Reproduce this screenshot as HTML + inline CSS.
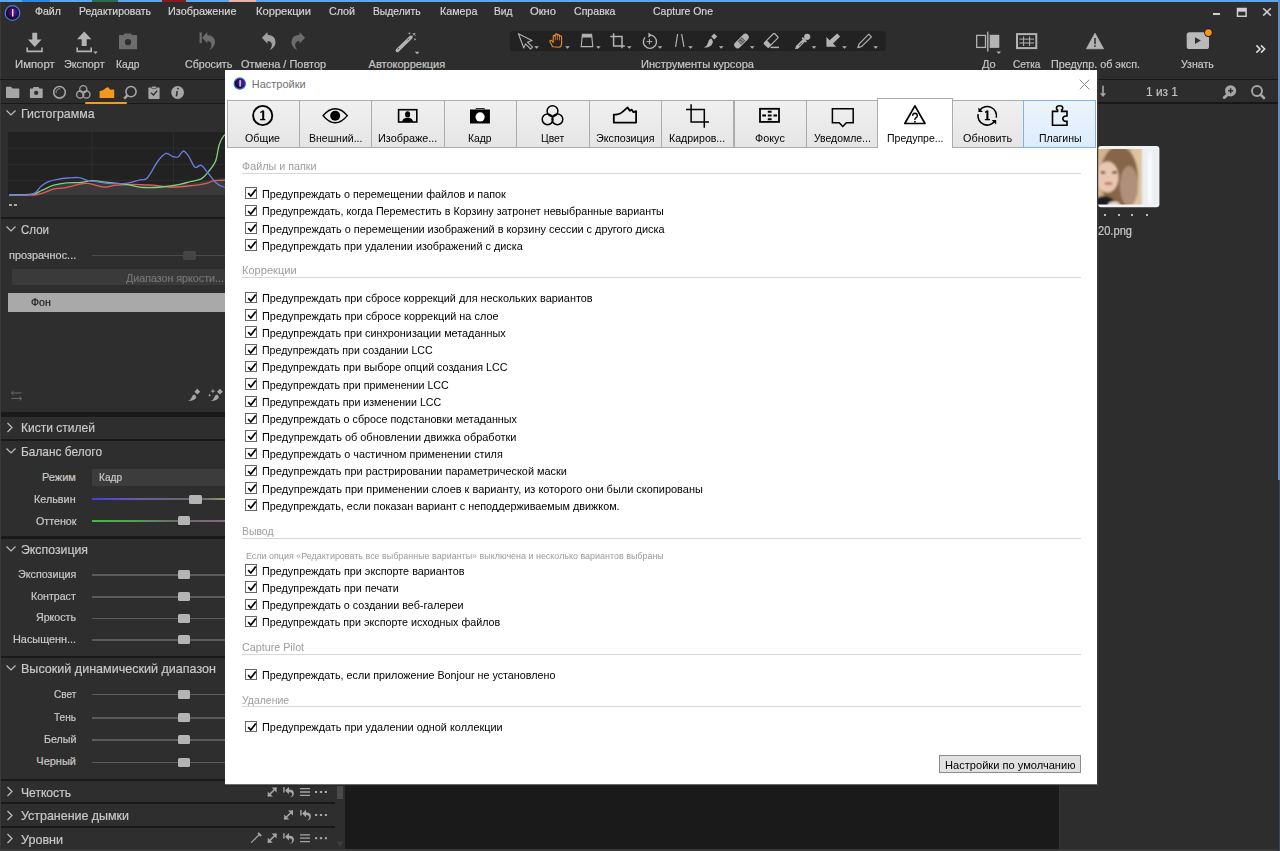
<!DOCTYPE html>
<html><head><meta charset="utf-8"><style>
html,body{margin:0;padding:0;width:1280px;height:851px;overflow:hidden;background:#2b2b2b}
</style></head><body>
<div style="position:absolute;left:0;top:0;width:1280px;height:851px;background:#2d2d2d"></div>
<div style="position:absolute;left:1px;top:104px;width:334px;height:745px;background:#2e2e2e;"></div>
<div style="position:absolute;left:0px;top:0px;width:1280px;height:2px;background:#5ea6ea;"></div>
<div style="position:absolute;left:22px;top:0px;width:28px;height:2px;background:#2f86de;"></div>
<div style="position:absolute;left:92px;top:0px;width:26px;height:2px;background:#2d6a4e;"></div>
<div style="position:absolute;left:162px;top:0px;width:24px;height:2px;background:#8a1c1c;"></div>
<div style="position:absolute;left:229px;top:0px;width:27px;height:2px;background:#e7b2a8;"></div>
<div style="position:absolute;left:0px;top:2px;width:1px;height:849px;background:#3a3a3a;"></div>
<div style="position:absolute;left:1278px;top:0px;width:2px;height:480px;background:#5f8fc8;"></div>
<div style="position:absolute;left:1279px;top:480px;width:1px;height:371px;background:#34485e;"></div>
<div style="position:absolute;left:0px;top:79px;width:1278px;height:1px;background:#171717;"></div>
<div style="position:absolute;left:34.60px;top:6.35px;font-family:'Liberation Sans';font-size:11px;line-height:1;font-weight:400;color:#d2d2d2;white-space:pre;transform:scaleX(0.9576);transform-origin:0 0;-webkit-text-stroke:0.2px #d2d2d2;">Файл</div>
<div style="position:absolute;left:78.50px;top:6.35px;font-family:'Liberation Sans';font-size:11px;line-height:1;font-weight:400;color:#d2d2d2;white-space:pre;transform:scaleX(0.9461);transform-origin:0 0;-webkit-text-stroke:0.2px #d2d2d2;">Редактировать</div>
<div style="position:absolute;left:167.50px;top:6.35px;font-family:'Liberation Sans';font-size:11px;line-height:1;font-weight:400;color:#d2d2d2;white-space:pre;transform:scaleX(0.9885);transform-origin:0 0;-webkit-text-stroke:0.2px #d2d2d2;">Изображение</div>
<div style="position:absolute;left:256.00px;top:6.35px;font-family:'Liberation Sans';font-size:11px;line-height:1;font-weight:400;color:#d2d2d2;white-space:pre;transform:scaleX(1.0132);transform-origin:0 0;-webkit-text-stroke:0.2px #d2d2d2;">Коррекции</div>
<div style="position:absolute;left:329.00px;top:6.35px;font-family:'Liberation Sans';font-size:11px;line-height:1;font-weight:400;color:#d2d2d2;white-space:pre;transform:scaleX(0.9720);transform-origin:0 0;-webkit-text-stroke:0.2px #d2d2d2;">Слой</div>
<div style="position:absolute;left:372.50px;top:6.35px;font-family:'Liberation Sans';font-size:11px;line-height:1;font-weight:400;color:#d2d2d2;white-space:pre;transform:scaleX(0.9360);transform-origin:0 0;-webkit-text-stroke:0.2px #d2d2d2;">Выделить</div>
<div style="position:absolute;left:440.00px;top:6.35px;font-family:'Liberation Sans';font-size:11px;line-height:1;font-weight:400;color:#d2d2d2;white-space:pre;transform:scaleX(0.9752);transform-origin:0 0;-webkit-text-stroke:0.2px #d2d2d2;">Камера</div>
<div style="position:absolute;left:494.00px;top:6.35px;font-family:'Liberation Sans';font-size:11px;line-height:1;font-weight:400;color:#d2d2d2;white-space:pre;transform:scaleX(0.9294);transform-origin:0 0;-webkit-text-stroke:0.2px #d2d2d2;">Вид</div>
<div style="position:absolute;left:530.00px;top:6.35px;font-family:'Liberation Sans';font-size:11px;line-height:1;font-weight:400;color:#d2d2d2;white-space:pre;transform:scaleX(1.0171);transform-origin:0 0;-webkit-text-stroke:0.2px #d2d2d2;">Окно</div>
<div style="position:absolute;left:573.50px;top:6.35px;font-family:'Liberation Sans';font-size:11px;line-height:1;font-weight:400;color:#d2d2d2;white-space:pre;transform:scaleX(0.9616);transform-origin:0 0;-webkit-text-stroke:0.2px #d2d2d2;">Справка</div>
<div style="position:absolute;left:653.00px;top:6.22px;font-family:'Liberation Sans';font-size:11.5px;line-height:1;font-weight:400;color:#d2d2d2;white-space:pre;transform:scaleX(0.9110);transform-origin:0 0;-webkit-text-stroke:0.2px #d2d2d2;">Capture One</div>
<svg style="position:absolute;left:4px;top:4.5px;" width="18" height="18" viewBox="0 0 18 18"><defs><radialGradient id="ai" cx="0.55" cy="0.45" r="0.6"><stop offset="0" stop-color="#6a1aa8"/><stop offset="0.6" stop-color="#2a0a4a"/><stop offset="1" stop-color="#000"/></radialGradient></defs><circle cx="8.5" cy="8" r="7.3" fill="url(#ai)" stroke="#3f7fe0" stroke-width="1.3"/><rect x="8" y="4" width="1.4" height="7.5" fill="#e8e0f0"/></svg>
<div style="position:absolute;left:1213px;top:12.6px;width:6.8px;height:2.4px;background:#cfcfcf;"></div>
<svg style="position:absolute;left:1236px;top:7px;" width="12" height="10" viewBox="0 0 12 10"><rect x="1.5" y="1.5" width="8.6" height="7.8" fill="none" stroke="#cfcfcf" stroke-width="1.5"/><rect x="1.5" y="1.2" width="8.6" height="3.5" fill="#cfcfcf"/></svg>
<svg style="position:absolute;left:1262px;top:7px;" width="11" height="10" viewBox="0 0 11 10"><path d="M1.2 1.2 L8.8 8.6 M8.8 1.2 L1.2 8.6" stroke="#cfcfcf" stroke-width="1.5"/></svg>
<div style="position:absolute;left:14.75px;top:58.85px;font-family:'Liberation Sans';font-size:11px;line-height:1;font-weight:400;color:#c6c6c6;white-space:pre;transform:scaleX(1.0307);transform-origin:0 0;-webkit-text-stroke:0.2px #c6c6c6;">Импорт</div>
<div style="position:absolute;left:64.40px;top:58.85px;font-family:'Liberation Sans';font-size:11px;line-height:1;font-weight:400;color:#c6c6c6;white-space:pre;transform:scaleX(0.9820);transform-origin:0 0;-webkit-text-stroke:0.2px #c6c6c6;">Экспорт</div>
<div style="position:absolute;left:116.00px;top:58.85px;font-family:'Liberation Sans';font-size:11px;line-height:1;font-weight:400;color:#c6c6c6;white-space:pre;transform:scaleX(0.9337);transform-origin:0 0;-webkit-text-stroke:0.2px #c6c6c6;">Кадр</div>
<div style="position:absolute;left:185.30px;top:58.85px;font-family:'Liberation Sans';font-size:11px;line-height:1;font-weight:400;color:#c6c6c6;white-space:pre;transform:scaleX(0.9672);transform-origin:0 0;-webkit-text-stroke:0.2px #c6c6c6;">Сбросить</div>
<div style="position:absolute;left:240.90px;top:58.85px;font-family:'Liberation Sans';font-size:11px;line-height:1;font-weight:400;color:#c6c6c6;white-space:pre;transform:scaleX(0.9962);transform-origin:0 0;-webkit-text-stroke:0.2px #c6c6c6;">Отмена / Повтор</div>
<div style="position:absolute;left:368.60px;top:58.85px;font-family:'Liberation Sans';font-size:11px;line-height:1;font-weight:400;color:#c6c6c6;white-space:pre;-webkit-text-stroke:0.2px #c6c6c6;">Автокоррекция</div>
<div style="position:absolute;left:641.00px;top:58.85px;font-family:'Liberation Sans';font-size:11px;line-height:1;font-weight:400;color:#c6c6c6;white-space:pre;transform:scaleX(1.0084);transform-origin:0 0;-webkit-text-stroke:0.2px #c6c6c6;">Инструменты курсора</div>
<div style="position:absolute;left:982.00px;top:58.85px;font-family:'Liberation Sans';font-size:11px;line-height:1;font-weight:400;color:#c6c6c6;white-space:pre;transform:scaleX(1.0034);transform-origin:0 0;-webkit-text-stroke:0.2px #c6c6c6;">До</div>
<div style="position:absolute;left:1013.00px;top:58.85px;font-family:'Liberation Sans';font-size:11px;line-height:1;font-weight:400;color:#c6c6c6;white-space:pre;transform:scaleX(0.9195);transform-origin:0 0;-webkit-text-stroke:0.2px #c6c6c6;">Сетка</div>
<div style="position:absolute;left:1050.50px;top:58.85px;font-family:'Liberation Sans';font-size:11px;line-height:1;font-weight:400;color:#c6c6c6;white-space:pre;transform:scaleX(0.9829);transform-origin:0 0;-webkit-text-stroke:0.2px #c6c6c6;">Предупр. об эксп.</div>
<div style="position:absolute;left:1181.00px;top:58.85px;font-family:'Liberation Sans';font-size:11px;line-height:1;font-weight:400;color:#c6c6c6;white-space:pre;transform:scaleX(0.9593);transform-origin:0 0;-webkit-text-stroke:0.2px #c6c6c6;">Узнать</div>
<div style="position:absolute;left:1px;top:80px;width:334px;height:23px;background:#2d2d2d;"></div>
<div style="position:absolute;left:1px;top:103px;width:334px;height:1px;background:#191919;"></div>
<div style="position:absolute;left:85px;top:102px;width:42px;height:2px;background:#f39a1e;border-radius:1px"></div>
<div style="position:absolute;left:21.00px;top:107.35px;font-family:'Liberation Sans';font-size:13px;line-height:1;font-weight:400;color:#c8c8c8;white-space:pre;transform:scaleX(0.9493);transform-origin:0 0;-webkit-text-stroke:0.2px #c8c8c8;">Гистограмма</div>
<svg style="position:absolute;left:5px;top:109.4px;" width="12" height="8" viewBox="0 0 12 8"><path d="M1.5 1.5 L6 6 L10.5 1.5" fill="none" stroke="#bdbdbd" stroke-width="1.2"/></svg>
<div style="position:absolute;left:21.00px;top:222.95px;font-family:'Liberation Sans';font-size:13px;line-height:1;font-weight:400;color:#c8c8c8;white-space:pre;transform:scaleX(0.8854);transform-origin:0 0;-webkit-text-stroke:0.2px #c8c8c8;">Слои</div>
<svg style="position:absolute;left:5px;top:225px;" width="12" height="8" viewBox="0 0 12 8"><path d="M1.5 1.5 L6 6 L10.5 1.5" fill="none" stroke="#bdbdbd" stroke-width="1.2"/></svg>
<div style="position:absolute;left:21.00px;top:421.35px;font-family:'Liberation Sans';font-size:13px;line-height:1;font-weight:400;color:#c8c8c8;white-space:pre;transform:scaleX(0.9254);transform-origin:0 0;-webkit-text-stroke:0.2px #c8c8c8;">Кисти стилей</div>
<svg style="position:absolute;left:6px;top:421.9px;" width="8" height="11" viewBox="0 0 8 11"><path d="M1.5 1 L6 5.5 L1.5 10" fill="none" stroke="#bdbdbd" stroke-width="1.2"/></svg>
<div style="position:absolute;left:21.00px;top:444.95px;font-family:'Liberation Sans';font-size:13px;line-height:1;font-weight:400;color:#c8c8c8;white-space:pre;transform:scaleX(0.9140);transform-origin:0 0;-webkit-text-stroke:0.2px #c8c8c8;">Баланс белого</div>
<svg style="position:absolute;left:5px;top:447px;" width="12" height="8" viewBox="0 0 12 8"><path d="M1.5 1.5 L6 6 L10.5 1.5" fill="none" stroke="#bdbdbd" stroke-width="1.2"/></svg>
<div style="position:absolute;left:21.00px;top:542.95px;font-family:'Liberation Sans';font-size:13px;line-height:1;font-weight:400;color:#c8c8c8;white-space:pre;transform:scaleX(0.9466);transform-origin:0 0;-webkit-text-stroke:0.2px #c8c8c8;">Экспозиция</div>
<svg style="position:absolute;left:5px;top:545px;" width="12" height="8" viewBox="0 0 12 8"><path d="M1.5 1.5 L6 6 L10.5 1.5" fill="none" stroke="#bdbdbd" stroke-width="1.2"/></svg>
<div style="position:absolute;left:21.00px;top:661.95px;font-family:'Liberation Sans';font-size:13px;line-height:1;font-weight:400;color:#c8c8c8;white-space:pre;transform:scaleX(0.9657);transform-origin:0 0;-webkit-text-stroke:0.2px #c8c8c8;">Высокий динамический диапазон</div>
<svg style="position:absolute;left:5px;top:664px;" width="12" height="8" viewBox="0 0 12 8"><path d="M1.5 1.5 L6 6 L10.5 1.5" fill="none" stroke="#bdbdbd" stroke-width="1.2"/></svg>
<div style="position:absolute;left:21.00px;top:785.75px;font-family:'Liberation Sans';font-size:13px;line-height:1;font-weight:400;color:#c8c8c8;white-space:pre;transform:scaleX(0.9308);transform-origin:0 0;-webkit-text-stroke:0.2px #c8c8c8;">Четкость</div>
<svg style="position:absolute;left:6px;top:786.3px;" width="8" height="11" viewBox="0 0 8 11"><path d="M1.5 1 L6 5.5 L1.5 10" fill="none" stroke="#bdbdbd" stroke-width="1.2"/></svg>
<div style="position:absolute;left:21.00px;top:809.25px;font-family:'Liberation Sans';font-size:13px;line-height:1;font-weight:400;color:#c8c8c8;white-space:pre;transform:scaleX(0.9573);transform-origin:0 0;-webkit-text-stroke:0.2px #c8c8c8;">Устранение дымки</div>
<svg style="position:absolute;left:6px;top:809.8px;" width="8" height="11" viewBox="0 0 8 11"><path d="M1.5 1 L6 5.5 L1.5 10" fill="none" stroke="#bdbdbd" stroke-width="1.2"/></svg>
<div style="position:absolute;left:21.00px;top:832.55px;font-family:'Liberation Sans';font-size:13px;line-height:1;font-weight:400;color:#c8c8c8;white-space:pre;transform:scaleX(0.9659);transform-origin:0 0;-webkit-text-stroke:0.2px #c8c8c8;">Уровни</div>
<svg style="position:absolute;left:6px;top:833.1px;" width="8" height="11" viewBox="0 0 8 11"><path d="M1.5 1 L6 5.5 L1.5 10" fill="none" stroke="#bdbdbd" stroke-width="1.2"/></svg>
<div style="position:absolute;left:1px;top:217px;width:334px;height:2px;background:#191919;"></div>
<div style="position:absolute;left:1px;top:412px;width:334px;height:5px;background:#191919;"></div>
<div style="position:absolute;left:1px;top:439px;width:334px;height:2px;background:#191919;"></div>
<div style="position:absolute;left:1px;top:536px;width:334px;height:3px;background:#191919;"></div>
<div style="position:absolute;left:1px;top:656px;width:334px;height:2px;background:#191919;"></div>
<div style="position:absolute;left:1px;top:779px;width:334px;height:2px;background:#191919;"></div>
<div style="position:absolute;left:1px;top:802px;width:334px;height:2px;background:#191919;"></div>
<div style="position:absolute;left:1px;top:826px;width:334px;height:2px;background:#191919;"></div>
<div style="position:absolute;left:1px;top:849px;width:334px;height:2px;background:#191919;"></div>
<div style="position:absolute;left:0px;top:849px;width:1278px;height:2px;background:#3a3a3a;"></div>
<div style="position:absolute;left:8px;top:132px;width:319px;height:63px;background:#222222;"></div>
<svg style="position:absolute;left:0;top:0" width="335" height="220" viewBox="0 0 335 220"><path d="M8 148.2 H327 M8 164.6 H327 M8 180.6 H327 M92 132 V195 M173.6 132 V195" stroke="#2e2e2e" stroke-width="1"/><polygon points="9.0,195.0 34.0,195.0 45.0,190.0 60.0,184.0 80.0,182.0 100.0,183.5 130.0,184.5 160.0,185.0 190.0,183.5 210.0,180.0 224.0,178.0 330.0,180.0 330.0,195.0" fill="#3a3a3a"/><path d="M9.0 195.0 C13.2 195.0 28.0 195.4 34.0 195.0 C40.0 194.6 41.7 193.4 45.0 192.4 C48.3 191.4 50.7 189.6 54.0 188.8 C57.3 188.1 60.5 188.7 64.7 187.9 C68.9 187.2 75.1 185.1 79.0 184.3 C82.9 183.6 83.8 183.0 88.0 183.4 C92.2 183.8 99.2 186.7 104.0 187.0 C108.8 187.3 111.7 185.6 116.8 185.2 C121.9 184.8 128.8 184.3 134.8 184.3 C140.8 184.3 146.7 184.8 152.7 185.2 C158.7 185.6 164.7 186.9 170.7 187.0 C176.7 187.1 182.7 186.6 188.7 186.0 C194.7 185.4 202.4 184.3 206.6 183.4 C210.8 182.5 211.0 181.2 213.8 180.7 C216.7 180.2 219.3 180.4 223.7 180.3 C228.1 180.2 222.3 179.2 240.0 180.0 C257.7 180.8 315.0 184.2 330.0 185.0" fill="none" stroke="#de5e58" stroke-width="1.3"/><path d="M9.0 195.0 C12.9 194.9 26.9 194.9 32.3 194.2 C37.7 193.5 37.7 192.1 41.3 190.6 C44.9 189.1 49.8 186.5 54.0 185.2 C58.2 183.9 62.0 183.3 66.5 182.9 C71.0 182.5 76.7 182.9 80.9 182.5 C85.1 182.1 87.1 180.7 91.6 180.7 C96.1 180.7 102.1 181.9 107.8 182.5 C113.5 183.1 119.8 183.5 125.8 184.3 C131.8 185.1 137.8 187.1 143.8 187.5 C149.8 187.9 155.7 187.5 161.7 187.0 C167.7 186.5 174.9 185.2 179.7 184.3 C184.5 183.4 186.9 182.5 190.5 181.6 C194.1 180.7 198.3 180.6 201.3 178.9 C204.3 177.2 206.0 174.7 208.4 171.7 C210.8 168.7 213.8 165.5 215.6 161.0 C217.4 156.5 217.8 149.0 219.2 144.8 C220.5 140.6 221.9 137.9 223.7 135.8 C225.5 133.7 228.9 132.6 230.0 132.0" fill="none" stroke="#7ed27e" stroke-width="1.3"/><path d="M9.0 195.0 C12.9 194.9 26.9 195.7 32.3 194.2 C37.7 192.7 38.6 188.1 41.3 186.0 C44.0 183.9 45.8 182.7 48.5 181.6 C51.2 180.5 54.2 179.9 57.5 179.3 C60.8 178.7 64.7 178.3 68.3 178.0 C71.9 177.7 75.7 177.2 79.0 177.6 C82.3 178.0 84.7 180.0 88.0 180.7 C91.3 181.4 95.5 181.6 98.8 182.0 C102.1 182.4 103.3 183.2 107.8 183.4 C112.3 183.6 120.4 184.0 125.8 183.4 C131.2 182.8 136.4 180.7 140.0 179.8 C143.6 178.9 144.3 181.1 147.3 178.0 C150.3 174.9 154.9 165.1 158.0 161.0 C161.1 156.9 163.6 154.2 166.0 153.4 C168.4 152.6 170.5 155.8 172.5 156.4 C174.5 157.0 176.2 157.9 178.0 157.0 C179.8 156.1 181.5 151.1 183.3 151.0 C185.1 150.9 186.8 153.7 188.7 156.4 C190.6 159.1 192.9 165.7 195.0 167.2 C197.1 168.7 199.1 164.3 201.3 165.4 C203.5 166.5 206.0 170.7 208.4 173.5 C210.8 176.3 213.1 180.2 215.6 182.5 C218.1 184.8 219.6 185.8 223.7 187.0 C227.8 188.2 222.3 189.2 240.0 190.0 C257.7 190.8 315.0 191.7 330.0 192.0" fill="none" stroke="#6a7ce0" stroke-width="1.3"/></svg>
<div style="position:absolute;left:8.8px;top:204.3px;width:3px;height:2px;background:#a8a8a8;"></div>
<div style="position:absolute;left:13.7px;top:204.3px;width:3px;height:2px;background:#a8a8a8;"></div>
<div style="position:absolute;left:8.60px;top:249.95px;font-family:'Liberation Sans';font-size:11px;line-height:1;font-weight:400;color:#c8c8c8;white-space:pre;transform:scaleX(0.9926);transform-origin:0 0;-webkit-text-stroke:0.2px #c8c8c8;">прозрачнос...</div>
<div style="position:absolute;left:91.6px;top:255px;width:240px;height:1px;background:#4a4a4a;"></div>
<div style="position:absolute;left:183px;top:251px;width:13px;height:9px;background:#454545;border-radius:2px"></div>
<div style="position:absolute;left:12px;top:269px;width:316px;height:16px;background:#3a3a3a;"></div>
<div style="position:absolute;left:125.80px;top:272.95px;font-family:'Liberation Sans';font-size:11px;line-height:1;font-weight:400;color:#757575;white-space:pre;transform:scaleX(0.9711);transform-origin:0 0;-webkit-text-stroke:0.2px #757575;">Диапазон яркости...</div>
<div style="position:absolute;left:8px;top:292.5px;width:320px;height:19.5px;background:#a9a9a9;"></div>
<div style="position:absolute;left:31.40px;top:296.65px;font-family:'Liberation Sans';font-size:11px;line-height:1;font-weight:400;color:#1e1e1e;white-space:pre;transform:scaleX(0.9629);transform-origin:0 0;-webkit-text-stroke:0.2px #1e1e1e;">Фон</div>
<div style="position:absolute;left:42.00px;top:471.65px;font-family:'Liberation Sans';font-size:11px;line-height:1;font-weight:400;color:#c8c8c8;white-space:pre;-webkit-text-stroke:0.2px #c8c8c8;">Режим</div>
<div style="position:absolute;left:91.6px;top:469px;width:240px;height:16.5px;background:#3c3c3c;"></div>
<div style="position:absolute;left:99.00px;top:472.15px;font-family:'Liberation Sans';font-size:11px;line-height:1;font-weight:400;color:#c8c8c8;white-space:pre;transform:scaleX(0.9177);transform-origin:0 0;-webkit-text-stroke:0.2px #c8c8c8;">Кадр</div>
<div style="position:absolute;left:34.40px;top:493.65px;font-family:'Liberation Sans';font-size:11px;line-height:1;font-weight:400;color:#c8c8c8;white-space:pre;transform:scaleX(0.9817);transform-origin:0 0;-webkit-text-stroke:0.2px #c8c8c8;">Кельвин</div>
<div style="position:absolute;left:35.60px;top:515.65px;font-family:'Liberation Sans';font-size:11px;line-height:1;font-weight:400;color:#c8c8c8;white-space:pre;transform:scaleX(0.9702);transform-origin:0 0;-webkit-text-stroke:0.2px #c8c8c8;">Оттенок</div>
<div style="position:absolute;left:91.6px;top:498px;width:240px;height:2px;background:linear-gradient(90deg,#4a3ae6 0%,#6a5ab0 20%,#6a6a6a 40%,#6a6a6a 46%,#a8a868 58%,#a8a868 100%);"></div>
<div style="position:absolute;left:189.3px;top:494.5px;width:12.6px;height:9px;background:#b4b4b4;border-radius:1.5px"></div>
<div style="position:absolute;left:91.6px;top:519.6px;width:240px;height:2px;background:linear-gradient(90deg,#3cc03c 0%,#5a9a5a 18%,#6a6a6a 36%,#6a6a6a 41%,#8a648a 55%,#b070b0 100%);"></div>
<div style="position:absolute;left:177.6px;top:516.1px;width:12.6px;height:9px;background:#b4b4b4;border-radius:1.5px"></div>
<div style="position:absolute;left:17.60px;top:569.45px;font-family:'Liberation Sans';font-size:11px;line-height:1;font-weight:400;color:#c8c8c8;white-space:pre;transform:scaleX(0.9751);transform-origin:0 0;-webkit-text-stroke:0.2px #c8c8c8;">Экспозиция</div>
<div style="position:absolute;left:91.6px;top:574.4px;width:240px;height:1.5px;background:#5a5a5a;"></div>
<div style="position:absolute;left:177.8px;top:570.4px;width:12.6px;height:9px;background:#b4b4b4;border-radius:1.5px"></div>
<div style="position:absolute;left:31.20px;top:590.65px;font-family:'Liberation Sans';font-size:11px;line-height:1;font-weight:400;color:#c8c8c8;white-space:pre;transform:scaleX(0.9651);transform-origin:0 0;-webkit-text-stroke:0.2px #c8c8c8;">Контраст</div>
<div style="position:absolute;left:91.6px;top:596.2px;width:240px;height:1.5px;background:#5a5a5a;"></div>
<div style="position:absolute;left:177.8px;top:592.2px;width:12.6px;height:9px;background:#b4b4b4;border-radius:1.5px"></div>
<div style="position:absolute;left:36.00px;top:612.35px;font-family:'Liberation Sans';font-size:11px;line-height:1;font-weight:400;color:#c8c8c8;white-space:pre;transform:scaleX(0.9664);transform-origin:0 0;-webkit-text-stroke:0.2px #c8c8c8;">Яркость</div>
<div style="position:absolute;left:91.6px;top:617.7px;width:240px;height:1.5px;background:#5a5a5a;"></div>
<div style="position:absolute;left:177.8px;top:613.7px;width:12.6px;height:9px;background:#b4b4b4;border-radius:1.5px"></div>
<div style="position:absolute;left:12.90px;top:634.35px;font-family:'Liberation Sans';font-size:11px;line-height:1;font-weight:400;color:#c8c8c8;white-space:pre;transform:scaleX(0.9884);transform-origin:0 0;-webkit-text-stroke:0.2px #c8c8c8;">Насыщенн...</div>
<div style="position:absolute;left:91.6px;top:639.4px;width:240px;height:1.5px;background:#5a5a5a;"></div>
<div style="position:absolute;left:177.8px;top:635.4px;width:12.6px;height:9px;background:#b4b4b4;border-radius:1.5px"></div>
<div style="position:absolute;left:53.60px;top:688.85px;font-family:'Liberation Sans';font-size:11px;line-height:1;font-weight:400;color:#c8c8c8;white-space:pre;transform:scaleX(0.9155);transform-origin:0 0;-webkit-text-stroke:0.2px #c8c8c8;">Свет</div>
<div style="position:absolute;left:91.6px;top:693.8px;width:240px;height:1.5px;background:#5a5a5a;"></div>
<div style="position:absolute;left:177.8px;top:689.8px;width:12.6px;height:9px;background:#b4b4b4;border-radius:1.5px"></div>
<div style="position:absolute;left:54.00px;top:712.35px;font-family:'Liberation Sans';font-size:11px;line-height:1;font-weight:400;color:#c8c8c8;white-space:pre;transform:scaleX(0.9155);transform-origin:0 0;-webkit-text-stroke:0.2px #c8c8c8;">Тень</div>
<div style="position:absolute;left:91.6px;top:717.3px;width:240px;height:1.5px;background:#5a5a5a;"></div>
<div style="position:absolute;left:177.8px;top:713.3px;width:12.6px;height:9px;background:#b4b4b4;border-radius:1.5px"></div>
<div style="position:absolute;left:43.50px;top:734.05px;font-family:'Liberation Sans';font-size:11px;line-height:1;font-weight:400;color:#c8c8c8;white-space:pre;transform:scaleX(0.9715);transform-origin:0 0;-webkit-text-stroke:0.2px #c8c8c8;">Белый</div>
<div style="position:absolute;left:91.6px;top:739.2px;width:240px;height:1.5px;background:#5a5a5a;"></div>
<div style="position:absolute;left:177.8px;top:735.2px;width:12.6px;height:9px;background:#b4b4b4;border-radius:1.5px"></div>
<div style="position:absolute;left:36.30px;top:756.45px;font-family:'Liberation Sans';font-size:11px;line-height:1;font-weight:400;color:#c8c8c8;white-space:pre;-webkit-text-stroke:0.2px #c8c8c8;">Черный</div>
<div style="position:absolute;left:91.6px;top:761.5px;width:240px;height:1.5px;background:#5a5a5a;"></div>
<div style="position:absolute;left:177.8px;top:757.5px;width:12.6px;height:9px;background:#b4b4b4;border-radius:1.5px"></div>
<div style="position:absolute;left:335px;top:80px;width:10px;height:769px;background:#2e2e2e;"></div>
<div style="position:absolute;left:336.5px;top:786px;width:6.5px;height:12.5px;background:#4a4a4a;"></div>
<div style="position:absolute;left:345px;top:80px;width:714px;height:769px;background:#1a1a1a;"></div>
<div style="position:absolute;left:1059px;top:80px;width:219px;height:769px;background:#2d2d2d;"></div>
<div style="position:absolute;left:1059px;top:80px;width:1px;height:769px;background:#333333;"></div>
<div style="position:absolute;left:1059px;top:79px;width:219px;height:1px;background:#171717;"></div>
<div style="position:absolute;left:1059px;top:102px;width:219px;height:1.5px;background:#171717;"></div>
<div style="position:absolute;left:1146.00px;top:85.78px;font-family:'Liberation Sans';font-size:12.5px;line-height:1;font-weight:400;color:#c0c0c0;white-space:pre;transform:scaleX(0.9530);transform-origin:0 0;-webkit-text-stroke:0.2px #c0c0c0;">1 из 1</div>
<svg style="position:absolute;left:1098px;top:145.7px" width="62" height="62" viewBox="0 0 62 62"><defs><filter id="bl" x="-10%" y="-10%" width="120%" height="120%"><feGaussianBlur stdDeviation="1.1"/></filter><clipPath id="cp"><rect x="0" y="2.9" width="59.3" height="55.6"/></clipPath></defs><rect x="0" y="0" width="61.4" height="61.3" rx="3" fill="#f2f2f2"/><g clip-path="url(#cp)"><g filter="url(#bl)"><rect x="-2" y="0" width="66" height="62" fill="#d2b48a"/><rect x="34" y="0" width="12" height="62" fill="#dcc4a0"/><rect x="44" y="0" width="20" height="62" fill="#eceff2"/><rect x="50" y="6" width="4" height="52" fill="#f8fafc"/><ellipse cx="21" cy="31" rx="19" ry="31" fill="#86654a"/><ellipse cx="31" cy="40" rx="9" ry="20" fill="#b0907a"/><ellipse cx="9.5" cy="31" rx="11" ry="15.5" fill="#e9c6b2"/><ellipse cx="5" cy="26.5" rx="2.4" ry="1.2" fill="#4a3028"/><ellipse cx="16.5" cy="26.5" rx="2.6" ry="1.3" fill="#4a3028"/><ellipse cx="10.5" cy="37.5" rx="4" ry="1.6" fill="#c8706a"/><ellipse cx="6" cy="56" rx="10" ry="6" fill="#1c1c24"/><ellipse cx="16" cy="59" rx="6" ry="3.5" fill="#ecd8ca"/></g></g></svg>
<div style="position:absolute;left:1104.4px;top:213.5px;width:2px;height:2px;background:#bdbdbd;"></div>
<div style="position:absolute;left:1118px;top:213.5px;width:2px;height:2px;background:#bdbdbd;"></div>
<div style="position:absolute;left:1131.4px;top:213.5px;width:2px;height:2px;background:#bdbdbd;"></div>
<div style="position:absolute;left:1145.8px;top:213.5px;width:2px;height:2px;background:#bdbdbd;"></div>
<div style="position:absolute;left:1098.00px;top:224.80px;font-family:'Liberation Sans';font-size:12px;line-height:1;font-weight:400;color:#c8c8c8;white-space:pre;transform:scaleX(0.9264);transform-origin:0 0;-webkit-text-stroke:0.2px #c8c8c8;">20.png</div>
<div style="position:absolute;left:509.5px;top:31.2px;width:376px;height:19.5px;background:#222222;border-radius:3px"></div>
<svg style="position:absolute;left:0;top:0" width="1280" height="851" viewBox="0 0 1280 851"><path d="M32.3 32.8 H37.2 V39.6 H41.6 L34.75 46.9 L27.9 39.6 H32.3 Z" fill="#b3b3b3"/><path d="M27.2 47.6 V51.4 H42 V47.6" fill="none" stroke="#b3b3b3" stroke-width="1.6"/><path d="M84.2 31.6 L91.4 39.2 H86.7 V46 H81.7 V39.2 H77 Z" fill="#b3b3b3"/><path d="M77.2 47.6 V51.4 H91.2 V47.6" fill="none" stroke="#b3b3b3" stroke-width="1.6"/><path d="M93.2 51.5 L97.8 51.5 L95.5 54.0 Z" fill="#b3b3b3"/><path d="M119 35.6 Q119 34.9 119.7 34.9 H123.6 L124.4 33.4 H131 L131.8 34.9 H136.4 Q137.1 34.9 137.1 35.6 V48.5 Q137.1 49.2 136.4 49.2 H119.7 Q119 49.2 119 48.5 Z" fill="#6c6c6c"/><circle cx="128" cy="42.2" r="3.1" fill="#2d2d2d"/><rect x="199.6" y="32.4" width="2.2" height="10.8" fill="#6c6c6c"/><path d="M202.2 37.8 L207.3 32.1 V34.9 Q215 35.4 214.9 42.6 Q214.5 47.6 209.3 50 Q212 46.6 211.5 44 Q210.8 41 207.3 41 V43.6 Z" fill="#6c6c6c"/><path d="M261.9 37.8 L267.5 31.9 V34.7 Q275.8 35.2 275.6 42.6 Q275.2 47.6 269.4 50.2 Q272.4 46.6 271.8 44 Q271 41 267.5 41 V43.8 Z" fill="#a0a0a0"/><path d="M305.1 37.8 L299.5 31.9 V34.7 Q291.2 35.2 291.4 42.6 Q291.8 47.6 297.6 50.2 Q294.6 46.6 295.2 44 Q296 41 299.5 41 V43.8 Z" fill="#6c6c6c"/><path d="M397.4 50.4 L410.9 37.3" stroke="#b3b3b3" stroke-width="3.6" stroke-linecap="round"/><path d="M397.8 49.3 l1.2 -1.2 M407.5 40.2 l1.6 -1.6" stroke="#2d2d2d" stroke-width="0.9"/><circle cx="409.4" cy="33.3" r="0.9" fill="#b3b3b3"/><path d="M412.8 33 L415.4 35.6 M415.4 33 L412.8 35.6" stroke="#b3b3b3" stroke-width="1"/><path d="M414.3 38.2 L416.4 39.3 L414.3 40.4 Z" fill="#b3b3b3"/><path d="M414.8 51.699999999999996 L419.40000000000003 51.699999999999996 L417.1 54.199999999999996 Z" fill="#b3b3b3"/><path d="M518.4 33.8 L532 40.6 L527.4 42.2 L532.6 47.2 L530.6 49 L525.5 43.9 L523.8 48 Z" fill="none" stroke="#b3b3b3" stroke-width="1.1" stroke-linejoin="round"/><path d="M534.3000000000001 46.199999999999996 L538.9 46.199999999999996 L536.6 48.699999999999996 Z" fill="#b3b3b3"/><path d="M552.6 46.8 L549.9 41.6 Q549.5 40.4 550.6 40.2 Q551.5 40.1 552.3 41.3 L553.2 42.4 V36.4 Q553.3 35.4 554.3 35.4 Q555.2 35.5 555.3 36.4 V34.8 Q555.4 33.9 556.3 33.9 Q557.3 34 557.4 34.8 V35.4 Q557.5 34.6 558.4 34.6 Q559.4 34.7 559.5 35.6 V36.6 Q559.6 35.8 560.5 35.8 Q561.5 35.9 561.6 36.8 V43.4 Q561.4 47 559.2 47.2 Z" fill="none" stroke="#e8892a" stroke-width="1.1" stroke-linejoin="round"/><path d="M555.3 36.4 V40.4 M557.4 35.2 V40.2 M559.5 36.2 V40.4" stroke="#e8892a" stroke-width="0.8"/><path d="M565.2 46.199999999999996 L569.8 46.199999999999996 L567.5 48.699999999999996 Z" fill="#b3b3b3"/><path d="M582.4 34.3 H591.6 L592.8 46.6 H581.2 Z" fill="none" stroke="#b3b3b3" stroke-width="1.1"/><path d="M582.4 34.3 H591.6 L592 37.6 H582 Z" fill="#b3b3b3"/><path d="M596.1 46.199999999999996 L600.6999999999999 46.199999999999996 L598.4 48.699999999999996 Z" fill="#b3b3b3"/><path d="M613.6 33.2 V46 H624.8 M610.3 36.6 H622 V48.2" fill="none" stroke="#b3b3b3" stroke-width="1.5"/><path d="M627.0 46.199999999999996 L631.5999999999999 46.199999999999996 L629.3 48.699999999999996 Z" fill="#b3b3b3"/><path d="M645 37.4 A6.6 6.6 0 1 0 649.4 35.2" fill="none" stroke="#b3b3b3" stroke-width="1.4"/><path d="M648.4 32.6 L651.8 35.3 L648.4 37.8 Z" fill="#b3b3b3"/><path d="M646.6 41.6 H652.2 M649.4 38.8 V44.4" stroke="#b3b3b3" stroke-width="1"/><path d="M657.7 46.199999999999996 L662.3 46.199999999999996 L660 48.699999999999996 Z" fill="#b3b3b3"/><path d="M677.6 34 L675.6 46.8 M681.6 34 L684 46.8" stroke="#b3b3b3" stroke-width="1.2"/><path d="M688.2 46.199999999999996 L692.8 46.199999999999996 L690.5 48.699999999999996 Z" fill="#b3b3b3"/><path d="M714.2 33.4 L717.2 36.4 L714.2 39.4 L711.2 36.4 Z" fill="#b3b3b3"/><path d="M711.2 38.6 Q714 41.4 712 44.4 Q709 47.8 703.8 47.6 Q707.2 46 707.8 43.2 Q708.6 39.4 711.2 38.6 Z" fill="#b3b3b3"/><path d="M718.9000000000001 46.199999999999996 L723.5 46.199999999999996 L721.2 48.699999999999996 Z" fill="#b3b3b3"/><g transform="rotate(-45 741.5 41)"><rect x="732.6" y="37.6" width="17.8" height="6.8" rx="3.4" fill="#b3b3b3"/><rect x="738.6" y="38.6" width="5.8" height="4.8" fill="#5a5a5a"/><circle cx="740.2" cy="40.2" r="0.6" fill="#b3b3b3"/><circle cx="742.8" cy="40.2" r="0.6" fill="#b3b3b3"/><circle cx="740.2" cy="41.8" r="0.6" fill="#b3b3b3"/><circle cx="742.8" cy="41.8" r="0.6" fill="#b3b3b3"/></g><path d="M749.9000000000001 46.199999999999996 L754.5 46.199999999999996 L752.2 48.699999999999996 Z" fill="#b3b3b3"/><g transform="rotate(-45 771 40.5)"><rect x="764" y="37.4" width="14.4" height="6.2" rx="1" fill="none" stroke="#b3b3b3" stroke-width="1.2"/><rect x="764" y="37.4" width="4.2" height="6.2" fill="#b3b3b3"/></g><path d="M770.6 47.4 H779" stroke="#b3b3b3" stroke-width="1.5"/><circle cx="807.2" cy="36.8" r="3.1" fill="#b3b3b3"/><path d="M802.2 37.6 L806.4 41.8" stroke="#b3b3b3" stroke-width="1.7"/><path d="M804 40.4 L797.4 47" stroke="#b3b3b3" stroke-width="3.4" stroke-linecap="round"/><circle cx="795.9" cy="48.3" r="0.9" fill="#b3b3b3"/><path d="M802.2 42.6 L798.8 46" stroke="#222" stroke-width="0.8"/><path d="M811.7 46.199999999999996 L816.3 46.199999999999996 L814 48.699999999999996 Z" fill="#b3b3b3"/><path d="M837.2 33.4 L840.2 36.4 L833 43.6 L836.2 46.8 H826.4 V37 L829.6 40.2 Z" fill="#b3b3b3"/><path d="M842.2 46.199999999999996 L846.8 46.199999999999996 L844.5 48.699999999999996 Z" fill="#b3b3b3"/><path d="M868.8 34.2 L871.4 36.8 L861.8 46.4 L857.8 47.6 L859.2 43.8 Z" fill="none" stroke="#b3b3b3" stroke-width="1.2" stroke-linejoin="round"/><path d="M873.4000000000001 46.199999999999996 L878.0 46.199999999999996 L875.7 48.699999999999996 Z" fill="#b3b3b3"/><rect x="976.7" y="35.4" width="8.8" height="12" fill="none" stroke="#b3b3b3" stroke-width="1.3"/><rect x="987.1" y="31.6" width="1.4" height="20" fill="#b3b3b3"/><rect x="989.7" y="34.8" width="9.6" height="13.1" fill="#b3b3b3"/><path d="M996.5 51.4 L1001.0999999999999 51.4 L998.8 53.9 Z" fill="#b3b3b3"/><rect x="1017" y="34.1" width="19.3" height="14" fill="none" stroke="#b3b3b3" stroke-width="2"/><path d="M1023.6 36.4 V46 M1029.6 36.4 V46 M1019.4 39.1 H1034 M1019.4 43 H1034" stroke="#b3b3b3" stroke-width="1"/><path d="M1095 33.2 L1103.6 48.8 H1086.4 Z" fill="#b3b3b3" stroke="#b3b3b3" stroke-width="0.8" stroke-linejoin="round"/><path d="M1095 38 V44.2" stroke="#2d2d2d" stroke-width="1.5"/><rect x="1094.25" y="45.3" width="1.5" height="1.6" fill="#2d2d2d"/><rect x="1186.7" y="32.2" width="22.3" height="16.8" rx="2.6" fill="#b9b9b9"/><path d="M1195 37.3 L1200.8 40.6 L1195 43.9 Z" fill="#2d2d2d"/><circle cx="1208.4" cy="32.6" r="4.3" fill="#1d1d1d"/><circle cx="1208.4" cy="32.6" r="3.4" fill="#f7941d"/><path d="M1256.4 45.4 L1260 49 L1256.4 52.6 M1261 45.4 L1264.6 49 L1261 52.6" fill="none" stroke="#dcdcdc" stroke-width="1.6"/><path d="M6 87.6 Q6 86.8 6.8 86.8 H11 L12.6 88.6 H18.6 Q19.3 88.6 19.3 89.4 V97.2 Q19.3 97.9 18.6 97.9 H6.7 Q6 97.9 6 97.2 Z" fill="#a6a6a6"/><path d="M29.9 89.2 Q29.9 88.5 30.6 88.5 H32.8 L33.6 86.9 H38.6 L39.4 88.5 H42 Q42.7 88.5 42.7 89.2 V97.2 Q42.7 97.9 42 97.9 H30.6 Q29.9 97.9 29.9 97.2 Z" fill="#a6a6a6"/><circle cx="36.2" cy="92.9" r="2.1" fill="#2d2d2d"/><circle cx="59.5" cy="92.3" r="5.8" fill="none" stroke="#a6a6a6" stroke-width="1.6"/><path d="M56.2 93.2 A3.6 3.6 0 0 1 60.2 88.8" fill="none" stroke="#a6a6a6" stroke-width="0.9"/><circle cx="83.3" cy="89.2" r="3.6" fill="none" stroke="#a6a6a6" stroke-width="1.3"/><circle cx="80.2" cy="94.6" r="3.6" fill="none" stroke="#a6a6a6" stroke-width="1.3"/><circle cx="86.4" cy="94.6" r="3.6" fill="none" stroke="#a6a6a6" stroke-width="1.3"/><path d="M99.6 91.2 Q103.4 91 105.2 88.6 L107.9 86.9 L110.4 89.8 L114.2 89.4 V98.1 H99.6 Z" fill="#f39a1e"/><circle cx="131" cy="91.6" r="5.1" fill="none" stroke="#a6a6a6" stroke-width="1.6"/><path d="M127.4 95.4 L124.2 98.6" stroke="#a6a6a6" stroke-width="2.6"/><rect x="148.4" y="87.6" width="11.2" height="11.3" rx="0.6" fill="#a6a6a6"/><rect x="151.6" y="86.2" width="4.8" height="2.4" rx="0.6" fill="#a6a6a6" stroke="#2d2d2d" stroke-width="0.6"/><path d="M151 92.8 L153.4 95 L157.2 90.8" fill="none" stroke="#2d2d2d" stroke-width="1.3"/><circle cx="177.6" cy="92.5" r="6.4" fill="#a6a6a6"/><path d="M177.2 91 L176.4 96.4" stroke="#2d2d2d" stroke-width="1.6"/><circle cx="178" cy="88.6" r="0.9" fill="#2d2d2d"/><path d="M1103 85.8 V95" stroke="#a6a6a6" stroke-width="1.6"/><path d="M1099.8 93.2 L1103 97 L1106.2 93.2 Z" fill="#a6a6a6"/><circle cx="1230.6" cy="90.8" r="5.6" fill="#a6a6a6"/><path d="M1227.4 94.8 L1224.2 97.6" stroke="#a6a6a6" stroke-width="2.8" stroke-linecap="round"/><path d="M1228.1 90.8 H1233.1 M1230.6 88.3 V93.3" stroke="#2d2d2d" stroke-width="1.5"/><circle cx="1257" cy="91" r="5" fill="none" stroke="#a6a6a6" stroke-width="1.9"/><path d="M1260.6 94.6 L1264 98" stroke="#a6a6a6" stroke-width="2.6" stroke-linecap="round"/><path d="M11.4 393 H21.6 M11.4 398.4 H21.6" stroke="#6a6a6a" stroke-width="1"/><path d="M13.6 391 L11.4 393 L13.6 395 M19.4 396.4 L21.6 398.4 L19.4 400.4" fill="none" stroke="#6a6a6a" stroke-width="1"/><path d="M197.3 388.8 L200.2 391.7 L197.3 394.6 L194.4 391.7 Z" fill="#a6a6a6"/><path d="M194.8 394.4 Q197 396.6 195.6 398.6 Q193.4 401.2 187.8 401 Q191 399.6 191.6 397.4 Q192.4 394.6 194.8 394.4 Z" fill="#a6a6a6"/><path d="M219.9 388.8 L222.8 391.7 L219.9 394.6 L217 391.7 Z" fill="#a6a6a6"/><path d="M217.4 394.4 Q219.6 396.6 218.2 398.6 Q216 401.2 210.4 401 Q213.6 399.6 214.2 397.4 Q215 394.6 217.4 394.4 Z" fill="#a6a6a6"/><path d="M212.9 388.6 L213.5 390.6 L215.5 391.2 L213.5 391.8 L212.9 393.8 L212.3 391.8 L210.3 391.2 L212.3 390.6 Z M209.6 394.1 L210.8 395.3 L209.6 396.5 L208.4 395.3 Z" fill="#a6a6a6"/><path d="M267.8 796.2 L276.40000000000003 787.8" stroke="#a6a6a6" stroke-width="1.6"/><path d="M267.8 796.6 V791.6 L272.8 796.6 Z M276.6 787.4 V792.4 L271.6 787.4 Z" fill="#a6a6a6"/><path d="M283.2 787 H284.6 V792.4 H283.2 Z" fill="#a6a6a6"/><path d="M289 786.8 L285 790.6 L289 794.2 V792 Q292.6 792 292.2 795 Q291.8 796.6 289.8 797.6 Q294.4 797 293.8 792.6 Q293.4 789.4 289 789.6 Z" fill="#a6a6a6"/><path d="M300 788.6 H310 M300 792 H310 M300 795.4 H310" stroke="#a6a6a6" stroke-width="1.3"/><rect x="315" y="791" width="2.2" height="2" fill="#a6a6a6"/><rect x="319.9" y="791" width="2.2" height="2" fill="#a6a6a6"/><rect x="324.8" y="791" width="2.2" height="2" fill="#a6a6a6"/><path d="M284.2 819.2 L292.8 810.8" stroke="#a6a6a6" stroke-width="1.6"/><path d="M284.2 819.6 V814.6 L289.2 819.6 Z M293.0 810.4 V815.4 L288.0 810.4 Z" fill="#a6a6a6"/><path d="M300.2 810 H301.6 V815.4 H300.2 Z" fill="#a6a6a6"/><path d="M306 809.8 L302 813.6 L306 817.2 V815 Q309.6 815 309.2 818 Q308.8 819.6 306.8 820.6 Q311.4 820 310.8 815.6 Q310.4 812.4 306 812.6 Z" fill="#a6a6a6"/><rect x="315" y="814" width="2.2" height="2" fill="#a6a6a6"/><rect x="319.9" y="814" width="2.2" height="2" fill="#a6a6a6"/><rect x="324.8" y="814" width="2.2" height="2" fill="#a6a6a6"/><path d="M251.2 842.6 L260.0 834.0" stroke="#a6a6a6" stroke-width="1.3"/><path d="M258.0 832.8000000000001 L261.2 836.0" stroke="#a6a6a6" stroke-width="1.8"/><path d="M267.8 842.4000000000001 L276.40000000000003 834.0" stroke="#a6a6a6" stroke-width="1.6"/><path d="M267.8 842.8000000000001 V837.8000000000001 L272.8 842.8000000000001 Z M276.6 833.6 V838.6 L271.6 833.6 Z" fill="#a6a6a6"/><path d="M283.2 833.2 H284.6 V838.6 H283.2 Z" fill="#a6a6a6"/><path d="M289 833.0 L285 836.8000000000001 L289 840.4000000000001 V838.2 Q292.6 838.2 292.2 841.2 Q291.8 842.8000000000001 289.8 843.8000000000001 Q294.4 843.2 293.8 838.8000000000001 Q293.4 835.6 289 835.8000000000001 Z" fill="#a6a6a6"/><path d="M300 834.8000000000001 H310 M300 838.2 H310 M300 841.6 H310" stroke="#a6a6a6" stroke-width="1.3"/><rect x="315" y="837.2" width="2.2" height="2" fill="#a6a6a6"/><rect x="319.9" y="837.2" width="2.2" height="2" fill="#a6a6a6"/><rect x="324.8" y="837.2" width="2.2" height="2" fill="#a6a6a6"/><path d="M337 841.6 H343 L340 847.6 Z" fill="#3f3f3f"/></svg>
<div style="position:absolute;left:225px;top:70px;width:872px;height:714px;background:#fff"></div>
<div style="position:absolute;left:225px;top:784px;width:873px;height:3px;background:linear-gradient(rgba(140,140,140,1), rgba(20,20,20,0.55) 55%, rgba(0,0,0,0));"></div>
<div style="position:absolute;left:1097px;top:71px;width:2px;height:716px;background:linear-gradient(90deg, rgba(60,60,60,0.9), rgba(0,0,0,0));"></div>
<div style="position:absolute;left:251.70px;top:78.65px;font-family:'Liberation Sans';font-size:11px;line-height:1;font-weight:400;color:#707070;white-space:pre;">Настройки</div>
<svg style="position:absolute;left:1079px;top:79px;" width="11" height="11" viewBox="0 0 11 11"><path d="M0.7 0.7 L10.3 10.3 M10.3 0.7 L0.7 10.3" stroke="#8a8a8a" stroke-width="1"/></svg>
<div style="position:absolute;left:226.5px;top:99.5px;width:73.4px;height:48px;background:linear-gradient(#f0f0f0,#e5e5e5);border:1px solid #acacac;box-sizing:border-box"></div>
<div style="position:absolute;left:298.9px;top:99.5px;width:73.4px;height:48px;background:linear-gradient(#f0f0f0,#e5e5e5);border:1px solid #acacac;box-sizing:border-box"></div>
<div style="position:absolute;left:371.4px;top:99.5px;width:73.4px;height:48px;background:linear-gradient(#f0f0f0,#e5e5e5);border:1px solid #acacac;box-sizing:border-box"></div>
<div style="position:absolute;left:443.8px;top:99.5px;width:73.4px;height:48px;background:linear-gradient(#f0f0f0,#e5e5e5);border:1px solid #acacac;box-sizing:border-box"></div>
<div style="position:absolute;left:516.3px;top:99.5px;width:73.4px;height:48px;background:linear-gradient(#f0f0f0,#e5e5e5);border:1px solid #acacac;box-sizing:border-box"></div>
<div style="position:absolute;left:588.7px;top:99.5px;width:73.4px;height:48px;background:linear-gradient(#f0f0f0,#e5e5e5);border:1px solid #acacac;box-sizing:border-box"></div>
<div style="position:absolute;left:661.1px;top:99.5px;width:73.4px;height:48px;background:linear-gradient(#f0f0f0,#e5e5e5);border:1px solid #acacac;box-sizing:border-box"></div>
<div style="position:absolute;left:733.6px;top:99.5px;width:73.4px;height:48px;background:linear-gradient(#f0f0f0,#e5e5e5);border:1px solid #acacac;box-sizing:border-box"></div>
<div style="position:absolute;left:806.0px;top:99.5px;width:73.4px;height:48px;background:linear-gradient(#f0f0f0,#e5e5e5);border:1px solid #acacac;box-sizing:border-box"></div>
<div style="position:absolute;left:877.2px;top:98px;width:75.8px;height:50px;background:#fff;border:1px solid #acacac;border-bottom:none;box-sizing:border-box;z-index:2"></div>
<div style="position:absolute;left:950.9px;top:99.5px;width:73.4px;height:48px;background:linear-gradient(#f0f0f0,#e5e5e5);border:1px solid #acacac;box-sizing:border-box"></div>
<div style="position:absolute;left:1023.3px;top:99.5px;width:72.4px;height:48px;background:linear-gradient(#ecf4fc,#dcecfc);border:1px solid #7eb4ea;box-sizing:border-box"></div>
<div style="position:absolute;left:245.00px;top:133.25px;font-family:'Liberation Sans';font-size:11px;line-height:1;font-weight:400;color:#000000;white-space:pre;transform:scaleX(0.9676);transform-origin:0 0;z-index:3">Общие</div>
<div style="position:absolute;left:308.60px;top:133.25px;font-family:'Liberation Sans';font-size:11px;line-height:1;font-weight:400;color:#000000;white-space:pre;transform:scaleX(0.9554);transform-origin:0 0;z-index:3">Внешний...</div>
<div style="position:absolute;left:378.20px;top:133.25px;font-family:'Liberation Sans';font-size:11px;line-height:1;font-weight:400;color:#000000;white-space:pre;transform:scaleX(0.9863);transform-origin:0 0;z-index:3">Изображе...</div>
<div style="position:absolute;left:468.40px;top:133.25px;font-family:'Liberation Sans';font-size:11px;line-height:1;font-weight:400;color:#000000;white-space:pre;transform:scaleX(0.9377);transform-origin:0 0;z-index:3">Кадр</div>
<div style="position:absolute;left:541.20px;top:133.25px;font-family:'Liberation Sans';font-size:11px;line-height:1;font-weight:400;color:#000000;white-space:pre;transform:scaleX(0.9409);transform-origin:0 0;z-index:3">Цвет</div>
<div style="position:absolute;left:595.50px;top:133.25px;font-family:'Liberation Sans';font-size:11px;line-height:1;font-weight:400;color:#000000;white-space:pre;transform:scaleX(0.9785);transform-origin:0 0;z-index:3">Экспозиция</div>
<div style="position:absolute;left:669.40px;top:133.25px;font-family:'Liberation Sans';font-size:11px;line-height:1;font-weight:400;color:#000000;white-space:pre;transform:scaleX(0.9612);transform-origin:0 0;z-index:3">Кадриров...</div>
<div style="position:absolute;left:754.90px;top:133.25px;font-family:'Liberation Sans';font-size:11px;line-height:1;font-weight:400;color:#000000;white-space:pre;transform:scaleX(0.9836);transform-origin:0 0;z-index:3">Фокус</div>
<div style="position:absolute;left:814.00px;top:133.25px;font-family:'Liberation Sans';font-size:11px;line-height:1;font-weight:400;color:#000000;white-space:pre;transform:scaleX(0.9501);transform-origin:0 0;z-index:3">Уведомле...</div>
<div style="position:absolute;left:886.75px;top:133.25px;font-family:'Liberation Sans';font-size:11px;line-height:1;font-weight:400;color:#000000;white-space:pre;transform:scaleX(0.9554);transform-origin:0 0;z-index:3">Предупре...</div>
<div style="position:absolute;left:962.90px;top:133.25px;font-family:'Liberation Sans';font-size:11px;line-height:1;font-weight:400;color:#000000;white-space:pre;transform:scaleX(0.9857);transform-origin:0 0;z-index:3">Обновить</div>
<div style="position:absolute;left:1038.60px;top:133.25px;font-family:'Liberation Sans';font-size:11px;line-height:1;font-weight:400;color:#000000;white-space:pre;transform:scaleX(0.9553);transform-origin:0 0;z-index:3">Плагины</div>
<svg style="position:absolute;left:0;top:0;z-index:4" width="1280" height="851" viewBox="0 0 1280 851"><circle cx="262.7" cy="115.5" r="9.6" fill="none" stroke="#000" stroke-width="1.9"/><path d="M263.2 110.6 V119.6" stroke="#000" stroke-width="2"/><path d="M260.1 119.6 H265.3" stroke="#000" stroke-width="1.3"/><path d="M263.4 110.8 L260.3 112.5" stroke="#000" stroke-width="1.4"/><path d="M323.1 115.6 C327 110.8 331 108.7 335.2 108.7 C339.4 108.7 343.4 110.8 347.3 115.6 C343.4 120.4 339.4 122.8 335.2 122.8 C331 122.8 327 120.4 323.1 115.6 Z" fill="none" stroke="#000" stroke-width="1.5"/><circle cx="335.2" cy="115.7" r="5" fill="#000"/><rect x="398.6" y="109.7" width="18.2" height="12.3" fill="none" stroke="#000" stroke-width="1.6"/><ellipse cx="407.6" cy="114.4" rx="2.5" ry="3.2" fill="#000"/><path d="M402 122 Q402.6 118.6 405.6 118 H409.6 Q412.6 118.6 413.2 122 Z" fill="#000"/><path d="M470 109.6 H475.6 L476 108 H484.4 L484.8 109.6 H489.9 V123.6 H470 Z" fill="#000"/><path d="M476.2 109.2 H484.2" stroke="#fff" stroke-width="0.6"/><circle cx="480.1" cy="116.9" r="4.6" fill="#fff"/><defs><radialGradient id="ai2" cx="0.6" cy="0.45" r="0.6"><stop offset="0" stop-color="#7a22c0"/><stop offset="0.55" stop-color="#30105a"/><stop offset="1" stop-color="#000"/></radialGradient></defs><circle cx="239.8" cy="83.6" r="5.6" fill="url(#ai2)" stroke="#2f6fe0" stroke-width="1.3"/><rect x="239.5" y="80" width="1.2" height="6.6" fill="#f0f0f0"/><circle cx="552.5" cy="111.1" r="5.4" fill="none" stroke="#000" stroke-width="1.5"/><circle cx="547.6" cy="119.3" r="5.4" fill="none" stroke="#000" stroke-width="1.5"/><circle cx="557.4" cy="119.3" r="5.4" fill="none" stroke="#000" stroke-width="1.5"/><path d="M613.8 122.6 V114.6 Q619.6 115 623.4 111.2 L627.6 107.4 L629.8 110.8 L631.6 109.6 L633.4 112.2 L636.1 111.2 V122.6 Z" fill="none" stroke="#000" stroke-width="1.8" stroke-linejoin="round"/><path d="M691.1 104.2 V122 H709 M686 109.4 H704.3 V127.7" fill="none" stroke="#000" stroke-width="1.5"/><rect x="760" y="108.8" width="19" height="13.1" fill="none" stroke="#000" stroke-width="1.8"/><path d="M762.2 115.5 H766 M767.8 115.5 H771.6 M773.4 115.5 H777 M767.8 111.8 H771.6 M767.8 119.2 H771.6" stroke="#000" stroke-width="2"/><path d="M832.4 108.7 H853.2 V122.7 H846.4 L842.8 126.4 L839.2 122.7 H832.4 Z" fill="none" stroke="#000" stroke-width="1.5" stroke-linejoin="miter"/><path d="M914.9 105.8 L925 123.5 H904.8 Z" fill="none" stroke="#000" stroke-width="1.7" stroke-linejoin="round"/><path d="M912.6 115.7 Q912.8 113.3 914.9 113.3 Q917.3 113.4 917.3 115.7 Q917.3 117.2 915.7 118 Q914.9 118.5 914.9 119.9" fill="none" stroke="#000" stroke-width="1.4"/><circle cx="914.9" cy="121.7" r="0.85" fill="#000"/><path d="M979.92 110.01 A9.3 9.3 0 0 1 996.31 117.69" fill="none" stroke="#000" stroke-width="1.6"/><path d="M978.07 114.03 A9.3 9.3 0 0 0 994.67 121.34" fill="none" stroke="#000" stroke-width="1.6"/><path d="M978.4 107.4 L978.4 112 L983 112 Z M991.6 120 L996.2 120 L996.2 124.6 Z" fill="#000"/><path d="M987.4 110.6 V119.6" stroke="#000" stroke-width="2"/><path d="M984.9 119.6 H990" stroke="#000" stroke-width="1.3"/><path d="M987.6 110.8 L985.1 112.4" stroke="#000" stroke-width="1.4"/><path d="M1052.5 111.4 H1057.6 V110 Q1056.4 109.4 1056.4 108 Q1056.6 105.8 1059.6 105.8 Q1062.6 105.8 1062.8 108 Q1062.8 109.4 1061.6 110 V111.4 H1067 V116 H1066.2 Q1063 116.2 1062.8 118.7 Q1063 121.2 1066.2 121.4 H1067 V125.2 H1052.5 Z" fill="none" stroke="#000" stroke-width="1.6" stroke-linejoin="miter"/></svg>
<div style="position:absolute;left:242.00px;top:161.25px;font-family:'Liberation Sans';font-size:11px;line-height:1;font-weight:400;color:#9d9d9d;white-space:pre;transform:scaleX(0.9790);transform-origin:0 0;">Файлы и папки</div>
<div style="position:absolute;left:242px;top:173px;width:839px;height:1px;background:#d7d7d7;"></div>
<div style="position:absolute;left:244.8px;top:187.3px;width:12.3px;height:11.5px;border:1px solid #666;box-sizing:border-box;background:#fff"></div>
<svg style="position:absolute;left:245.5px;top:187.3px;" width="12" height="12" viewBox="0 0 12 12"><path d="M2.2 6.2 L4.8 9 L9.8 2.6" fill="none" stroke="#000" stroke-width="1.7"/></svg>
<div style="position:absolute;left:262.40px;top:188.85px;font-family:'Liberation Sans';font-size:11px;line-height:1;font-weight:400;color:#000;white-space:pre;transform:scaleX(0.9829);transform-origin:0 0;">Предупреждать о перемещении файлов и папок</div>
<div style="position:absolute;left:244.8px;top:204.6px;width:12.3px;height:11.5px;border:1px solid #666;box-sizing:border-box;background:#fff"></div>
<svg style="position:absolute;left:245.5px;top:204.63px;" width="12" height="12" viewBox="0 0 12 12"><path d="M2.2 6.2 L4.8 9 L9.8 2.6" fill="none" stroke="#000" stroke-width="1.7"/></svg>
<div style="position:absolute;left:262.40px;top:206.18px;font-family:'Liberation Sans';font-size:11px;line-height:1;font-weight:400;color:#000;white-space:pre;transform:scaleX(0.9768);transform-origin:0 0;">Предупреждать, когда Переместить в Корзину затронет невыбранные варианты</div>
<div style="position:absolute;left:244.8px;top:222.0px;width:12.3px;height:11.5px;border:1px solid #666;box-sizing:border-box;background:#fff"></div>
<svg style="position:absolute;left:245.5px;top:221.96px;" width="12" height="12" viewBox="0 0 12 12"><path d="M2.2 6.2 L4.8 9 L9.8 2.6" fill="none" stroke="#000" stroke-width="1.7"/></svg>
<div style="position:absolute;left:262.40px;top:223.51px;font-family:'Liberation Sans';font-size:11px;line-height:1;font-weight:400;color:#000;white-space:pre;transform:scaleX(0.9917);transform-origin:0 0;">Предупреждать о перемещении изображений в корзину сессии с другого диска</div>
<div style="position:absolute;left:244.8px;top:239.3px;width:12.3px;height:11.5px;border:1px solid #666;box-sizing:border-box;background:#fff"></div>
<svg style="position:absolute;left:245.5px;top:239.29000000000002px;" width="12" height="12" viewBox="0 0 12 12"><path d="M2.2 6.2 L4.8 9 L9.8 2.6" fill="none" stroke="#000" stroke-width="1.7"/></svg>
<div style="position:absolute;left:262.40px;top:240.84px;font-family:'Liberation Sans';font-size:11px;line-height:1;font-weight:400;color:#000;white-space:pre;transform:scaleX(0.9850);transform-origin:0 0;">Предупреждать при удалении изображений с диска</div>
<div style="position:absolute;left:242.00px;top:265.25px;font-family:'Liberation Sans';font-size:11px;line-height:1;font-weight:400;color:#9d9d9d;white-space:pre;transform:scaleX(1.0077);transform-origin:0 0;">Коррекции</div>
<div style="position:absolute;left:242px;top:277px;width:839px;height:1px;background:#d7d7d7;"></div>
<div style="position:absolute;left:244.8px;top:291.7px;width:12.3px;height:11.5px;border:1px solid #666;box-sizing:border-box;background:#fff"></div>
<svg style="position:absolute;left:245.5px;top:291.7px;" width="12" height="12" viewBox="0 0 12 12"><path d="M2.2 6.2 L4.8 9 L9.8 2.6" fill="none" stroke="#000" stroke-width="1.7"/></svg>
<div style="position:absolute;left:262.40px;top:293.25px;font-family:'Liberation Sans';font-size:11px;line-height:1;font-weight:400;color:#000;white-space:pre;transform:scaleX(0.9886);transform-origin:0 0;">Предупреждать при сбросе коррекций для нескольких вариантов</div>
<div style="position:absolute;left:244.8px;top:309.0px;width:12.3px;height:11.5px;border:1px solid #666;box-sizing:border-box;background:#fff"></div>
<svg style="position:absolute;left:245.5px;top:309.01px;" width="12" height="12" viewBox="0 0 12 12"><path d="M2.2 6.2 L4.8 9 L9.8 2.6" fill="none" stroke="#000" stroke-width="1.7"/></svg>
<div style="position:absolute;left:262.40px;top:310.56px;font-family:'Liberation Sans';font-size:11px;line-height:1;font-weight:400;color:#000;white-space:pre;transform:scaleX(0.9906);transform-origin:0 0;">Предупреждать при сбросе коррекций на слое</div>
<div style="position:absolute;left:244.8px;top:326.3px;width:12.3px;height:11.5px;border:1px solid #666;box-sizing:border-box;background:#fff"></div>
<svg style="position:absolute;left:245.5px;top:326.32px;" width="12" height="12" viewBox="0 0 12 12"><path d="M2.2 6.2 L4.8 9 L9.8 2.6" fill="none" stroke="#000" stroke-width="1.7"/></svg>
<div style="position:absolute;left:262.40px;top:327.87px;font-family:'Liberation Sans';font-size:11px;line-height:1;font-weight:400;color:#000;white-space:pre;transform:scaleX(0.9840);transform-origin:0 0;">Предупреждать при синхронизации метаданных</div>
<div style="position:absolute;left:244.8px;top:343.6px;width:12.3px;height:11.5px;border:1px solid #666;box-sizing:border-box;background:#fff"></div>
<svg style="position:absolute;left:245.5px;top:343.63px;" width="12" height="12" viewBox="0 0 12 12"><path d="M2.2 6.2 L4.8 9 L9.8 2.6" fill="none" stroke="#000" stroke-width="1.7"/></svg>
<div style="position:absolute;left:262.40px;top:345.18px;font-family:'Liberation Sans';font-size:11px;line-height:1;font-weight:400;color:#000;white-space:pre;transform:scaleX(0.9637);transform-origin:0 0;">Предупреждать при создании LCC</div>
<div style="position:absolute;left:244.8px;top:360.9px;width:12.3px;height:11.5px;border:1px solid #666;box-sizing:border-box;background:#fff"></div>
<svg style="position:absolute;left:245.5px;top:360.94px;" width="12" height="12" viewBox="0 0 12 12"><path d="M2.2 6.2 L4.8 9 L9.8 2.6" fill="none" stroke="#000" stroke-width="1.7"/></svg>
<div style="position:absolute;left:262.40px;top:362.49px;font-family:'Liberation Sans';font-size:11px;line-height:1;font-weight:400;color:#000;white-space:pre;transform:scaleX(0.9737);transform-origin:0 0;">Предупреждать при выборе опций создания LCC</div>
<div style="position:absolute;left:244.8px;top:378.2px;width:12.3px;height:11.5px;border:1px solid #666;box-sizing:border-box;background:#fff"></div>
<svg style="position:absolute;left:245.5px;top:378.25px;" width="12" height="12" viewBox="0 0 12 12"><path d="M2.2 6.2 L4.8 9 L9.8 2.6" fill="none" stroke="#000" stroke-width="1.7"/></svg>
<div style="position:absolute;left:262.40px;top:379.80px;font-family:'Liberation Sans';font-size:11px;line-height:1;font-weight:400;color:#000;white-space:pre;transform:scaleX(0.9721);transform-origin:0 0;">Предупреждать при применении LCC</div>
<div style="position:absolute;left:244.8px;top:395.6px;width:12.3px;height:11.5px;border:1px solid #666;box-sizing:border-box;background:#fff"></div>
<svg style="position:absolute;left:245.5px;top:395.55999999999995px;" width="12" height="12" viewBox="0 0 12 12"><path d="M2.2 6.2 L4.8 9 L9.8 2.6" fill="none" stroke="#000" stroke-width="1.7"/></svg>
<div style="position:absolute;left:262.40px;top:397.11px;font-family:'Liberation Sans';font-size:11px;line-height:1;font-weight:400;color:#000;white-space:pre;transform:scaleX(0.9679);transform-origin:0 0;">Предупреждать при изменении LCC</div>
<div style="position:absolute;left:244.8px;top:412.9px;width:12.3px;height:11.5px;border:1px solid #666;box-sizing:border-box;background:#fff"></div>
<svg style="position:absolute;left:245.5px;top:412.87px;" width="12" height="12" viewBox="0 0 12 12"><path d="M2.2 6.2 L4.8 9 L9.8 2.6" fill="none" stroke="#000" stroke-width="1.7"/></svg>
<div style="position:absolute;left:262.40px;top:414.42px;font-family:'Liberation Sans';font-size:11px;line-height:1;font-weight:400;color:#000;white-space:pre;transform:scaleX(0.9784);transform-origin:0 0;">Предупреждать о сбросе подстановки метаданных</div>
<div style="position:absolute;left:244.8px;top:430.2px;width:12.3px;height:11.5px;border:1px solid #666;box-sizing:border-box;background:#fff"></div>
<svg style="position:absolute;left:245.5px;top:430.17999999999995px;" width="12" height="12" viewBox="0 0 12 12"><path d="M2.2 6.2 L4.8 9 L9.8 2.6" fill="none" stroke="#000" stroke-width="1.7"/></svg>
<div style="position:absolute;left:262.40px;top:431.73px;font-family:'Liberation Sans';font-size:11px;line-height:1;font-weight:400;color:#000;white-space:pre;transform:scaleX(0.9944);transform-origin:0 0;">Предупреждать об обновлении движка обработки</div>
<div style="position:absolute;left:244.8px;top:447.5px;width:12.3px;height:11.5px;border:1px solid #666;box-sizing:border-box;background:#fff"></div>
<svg style="position:absolute;left:245.5px;top:447.49px;" width="12" height="12" viewBox="0 0 12 12"><path d="M2.2 6.2 L4.8 9 L9.8 2.6" fill="none" stroke="#000" stroke-width="1.7"/></svg>
<div style="position:absolute;left:262.40px;top:449.04px;font-family:'Liberation Sans';font-size:11px;line-height:1;font-weight:400;color:#000;white-space:pre;transform:scaleX(0.9861);transform-origin:0 0;">Предупреждать о частичном применении стиля</div>
<div style="position:absolute;left:244.8px;top:464.8px;width:12.3px;height:11.5px;border:1px solid #666;box-sizing:border-box;background:#fff"></div>
<svg style="position:absolute;left:245.5px;top:464.79999999999995px;" width="12" height="12" viewBox="0 0 12 12"><path d="M2.2 6.2 L4.8 9 L9.8 2.6" fill="none" stroke="#000" stroke-width="1.7"/></svg>
<div style="position:absolute;left:262.40px;top:466.35px;font-family:'Liberation Sans';font-size:11px;line-height:1;font-weight:400;color:#000;white-space:pre;transform:scaleX(0.9904);transform-origin:0 0;">Предупреждать при растрировании параметрической маски</div>
<div style="position:absolute;left:244.8px;top:482.1px;width:12.3px;height:11.5px;border:1px solid #666;box-sizing:border-box;background:#fff"></div>
<svg style="position:absolute;left:245.5px;top:482.11px;" width="12" height="12" viewBox="0 0 12 12"><path d="M2.2 6.2 L4.8 9 L9.8 2.6" fill="none" stroke="#000" stroke-width="1.7"/></svg>
<div style="position:absolute;left:262.40px;top:483.66px;font-family:'Liberation Sans';font-size:11px;line-height:1;font-weight:400;color:#000;white-space:pre;transform:scaleX(0.9965);transform-origin:0 0;">Предупреждать при применении слоев к варианту, из которого они были скопированы</div>
<div style="position:absolute;left:244.8px;top:499.4px;width:12.3px;height:11.5px;border:1px solid #666;box-sizing:border-box;background:#fff"></div>
<svg style="position:absolute;left:245.5px;top:499.41999999999996px;" width="12" height="12" viewBox="0 0 12 12"><path d="M2.2 6.2 L4.8 9 L9.8 2.6" fill="none" stroke="#000" stroke-width="1.7"/></svg>
<div style="position:absolute;left:262.40px;top:500.97px;font-family:'Liberation Sans';font-size:11px;line-height:1;font-weight:400;color:#000;white-space:pre;transform:scaleX(0.9821);transform-origin:0 0;">Предупреждать, если показан вариант с неподдерживаемым движком.</div>
<div style="position:absolute;left:242.00px;top:525.85px;font-family:'Liberation Sans';font-size:11px;line-height:1;font-weight:400;color:#9d9d9d;white-space:pre;transform:scaleX(0.9469);transform-origin:0 0;">Вывод</div>
<div style="position:absolute;left:242px;top:538px;width:839px;height:1px;background:#d7d7d7;"></div>
<div style="position:absolute;left:246.20px;top:551.95px;font-family:'Liberation Sans';font-size:9px;line-height:1;font-weight:400;color:#9a9a9a;white-space:pre;transform:scaleX(0.9934);transform-origin:0 0;">Если опция «Редактировать все выбранные варианты» выключена и несколько вариантов выбраны</div>
<div style="position:absolute;left:244.8px;top:564.0px;width:12.3px;height:11.5px;border:1px solid #666;box-sizing:border-box;background:#fff"></div>
<svg style="position:absolute;left:245.5px;top:564.0px;" width="12" height="12" viewBox="0 0 12 12"><path d="M2.2 6.2 L4.8 9 L9.8 2.6" fill="none" stroke="#000" stroke-width="1.7"/></svg>
<div style="position:absolute;left:262.40px;top:565.55px;font-family:'Liberation Sans';font-size:11px;line-height:1;font-weight:400;color:#000;white-space:pre;transform:scaleX(0.9830);transform-origin:0 0;">Предупреждать при экспорте вариантов</div>
<div style="position:absolute;left:244.8px;top:581.3px;width:12.3px;height:11.5px;border:1px solid #666;box-sizing:border-box;background:#fff"></div>
<svg style="position:absolute;left:245.5px;top:581.3px;" width="12" height="12" viewBox="0 0 12 12"><path d="M2.2 6.2 L4.8 9 L9.8 2.6" fill="none" stroke="#000" stroke-width="1.7"/></svg>
<div style="position:absolute;left:262.40px;top:582.85px;font-family:'Liberation Sans';font-size:11px;line-height:1;font-weight:400;color:#000;white-space:pre;transform:scaleX(0.9832);transform-origin:0 0;">Предупреждать при печати</div>
<div style="position:absolute;left:244.8px;top:598.6px;width:12.3px;height:11.5px;border:1px solid #666;box-sizing:border-box;background:#fff"></div>
<svg style="position:absolute;left:245.5px;top:598.6px;" width="12" height="12" viewBox="0 0 12 12"><path d="M2.2 6.2 L4.8 9 L9.8 2.6" fill="none" stroke="#000" stroke-width="1.7"/></svg>
<div style="position:absolute;left:262.40px;top:600.15px;font-family:'Liberation Sans';font-size:11px;line-height:1;font-weight:400;color:#000;white-space:pre;transform:scaleX(0.9810);transform-origin:0 0;">Предупреждать о создании веб-галереи</div>
<div style="position:absolute;left:244.8px;top:615.9px;width:12.3px;height:11.5px;border:1px solid #666;box-sizing:border-box;background:#fff"></div>
<svg style="position:absolute;left:245.5px;top:615.9px;" width="12" height="12" viewBox="0 0 12 12"><path d="M2.2 6.2 L4.8 9 L9.8 2.6" fill="none" stroke="#000" stroke-width="1.7"/></svg>
<div style="position:absolute;left:262.40px;top:617.45px;font-family:'Liberation Sans';font-size:11px;line-height:1;font-weight:400;color:#000;white-space:pre;transform:scaleX(0.9750);transform-origin:0 0;">Предупреждать при экспорте исходных файлов</div>
<div style="position:absolute;left:242.00px;top:642.25px;font-family:'Liberation Sans';font-size:11px;line-height:1;font-weight:400;color:#9d9d9d;white-space:pre;transform:scaleX(0.9765);transform-origin:0 0;">Capture Pilot</div>
<div style="position:absolute;left:242px;top:654px;width:839px;height:1px;background:#d7d7d7;"></div>
<div style="position:absolute;left:244.8px;top:668.8px;width:12.3px;height:11.5px;border:1px solid #666;box-sizing:border-box;background:#fff"></div>
<svg style="position:absolute;left:245.5px;top:668.75px;" width="12" height="12" viewBox="0 0 12 12"><path d="M2.2 6.2 L4.8 9 L9.8 2.6" fill="none" stroke="#000" stroke-width="1.7"/></svg>
<div style="position:absolute;left:262.40px;top:670.30px;font-family:'Liberation Sans';font-size:11px;line-height:1;font-weight:400;color:#000;white-space:pre;transform:scaleX(0.9783);transform-origin:0 0;">Предупреждать, если приложение Bonjour не установлено</div>
<div style="position:absolute;left:242.00px;top:694.65px;font-family:'Liberation Sans';font-size:11px;line-height:1;font-weight:400;color:#9d9d9d;white-space:pre;transform:scaleX(0.9506);transform-origin:0 0;">Удаление</div>
<div style="position:absolute;left:242px;top:706px;width:839px;height:1px;background:#d7d7d7;"></div>
<div style="position:absolute;left:244.8px;top:720.9px;width:12.3px;height:11.5px;border:1px solid #666;box-sizing:border-box;background:#fff"></div>
<svg style="position:absolute;left:245.5px;top:720.9px;" width="12" height="12" viewBox="0 0 12 12"><path d="M2.2 6.2 L4.8 9 L9.8 2.6" fill="none" stroke="#000" stroke-width="1.7"/></svg>
<div style="position:absolute;left:262.40px;top:722.45px;font-family:'Liberation Sans';font-size:11px;line-height:1;font-weight:400;color:#000;white-space:pre;transform:scaleX(0.9896);transform-origin:0 0;">Предупреждать при удалении одной коллекции</div>
<div style="position:absolute;left:939.4px;top:755.4px;width:141.6px;height:17.5px;background:#e1e1e1;border:1px solid #8c8c8c;box-sizing:border-box"></div>
<div style="position:absolute;left:945.00px;top:759.65px;font-family:'Liberation Sans';font-size:11px;line-height:1;font-weight:400;color:#000;white-space:pre;transform:scaleX(1.0082);transform-origin:0 0;">Настройки по умолчанию</div>
</body></html>
